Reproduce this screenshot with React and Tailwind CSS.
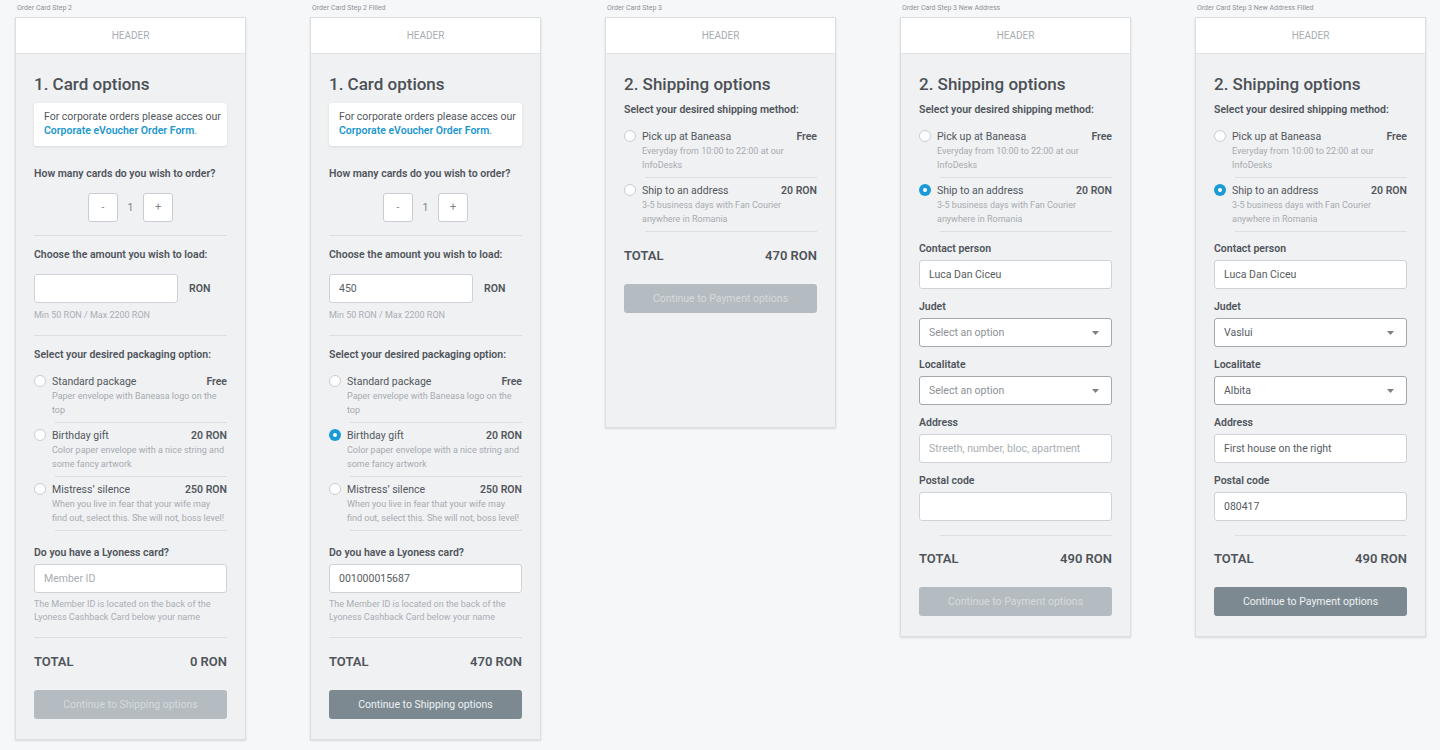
import React from "react";

const FONT = { fontFamily: "Roboto, 'Noto Sans', Arial, sans-serif" };

function Radio({ checked }) {
  if (checked) {
    return (
      <div className="mt-[1px] flex h-[12px] w-[12px] shrink-0 items-center justify-center rounded-full bg-[#1a9bd7]">
        <div className="h-[4px] w-[4px] rounded-full bg-white" />
      </div>
    );
  }
  return <div className="mt-[1px] h-[12px] w-[12px] shrink-0 rounded-full border border-[#c9cdd1] bg-white" />;
}

function Option({ title, price, desc, checked }) {
  return (
    <div className="flex flex-col">
      <div className="flex pt-[5px] pb-[5px]">
        <Radio checked={checked} />
        <div className="ml-[6px] flex-1">
          <div className="flex justify-between text-[10.5px] leading-[15px] text-[#52575d]">
            <span>{title}</span>
            <span className="font-semibold">{price}</span>
          </div>
          <div className="text-[9px] leading-[14px] text-[#a6abb0]">
            {desc.map((l, i) => (
              <div key={i} className="whitespace-nowrap">{l}</div>
            ))}
          </div>
        </div>
      </div>
      <div className="ml-[21px] h-px bg-[#dcdfe2]" />
    </div>
  );
}

function Divider({ className = "" }) {
  return <div className={"h-px bg-[#dcdfe2] " + className} />;
}

function Label({ children, className = "" }) {
  return <div className={"text-[10.5px] font-semibold leading-[14px] text-[#4f545a] " + className}>{children}</div>;
}

function Input({ value, placeholder, className = "" }) {
  return (
    <div className={"flex h-[29px] items-center rounded-[3px] border border-[#cfd3d7] bg-white px-[9px] text-[10.5px] " + className}>
      {value ? <span className="text-[#575c62]">{value}</span> : <span className="text-[#a8adb2]">{placeholder || ""}</span>}
    </div>
  );
}

function Select({ value, className = "" }) {
  return (
    <div className={"flex h-[29px] items-center justify-between rounded-[3px] border border-[#a3a8ad] bg-white pl-[9px] pr-[12px] text-[10.5px] " + className}>
      <span className={value ? "text-[#575c62]" : "text-[#8c9196]"}>{value || "Select an option"}</span>
      <svg width="7" height="4" viewBox="0 0 7 4"><path d="M0 0 L7 0 L3.5 4 Z" fill="#7a8086" /></svg>
    </div>
  );
}

function Button({ children, enabled, className = "" }) {
  return (
    <div
      className={
        "flex h-[29px] items-center justify-center rounded-[3px] text-[10.5px] " +
        (enabled ? "bg-[#7c8991] text-[#eef1f3]" : "bg-[#b4bcc1] text-[#d5dadd]") +
        " " +
        className
      }
    >
      {children}
    </div>
  );
}

function Total({ value, className = "" }) {
  return (
    <div className={"flex justify-between text-[13px] font-semibold leading-[16px] text-[#4f545a] " + className}>
      <span>TOTAL</span>
      <span>{value}</span>
    </div>
  );
}

function Column({ label, children, cardClass = "" }) {
  return (
    <div className="flex w-[231px] shrink-0 flex-col">
      <div className="h-[17px] pl-[2px] text-[7px] leading-[17px] text-[#8d9297]">{label}</div>
      <div className={"flex flex-col border border-[#dcdfe2] bg-[#f0f1f3] shadow-[0_1px_2px_rgba(0,0,0,0.12)] " + cardClass}>
        <div className="flex h-[36px] items-center justify-center border-b border-[#e1e3e6] bg-white text-[10px] text-[#a9adb2]">
          HEADER
        </div>
        <div className="flex flex-col px-[18px] pt-[20px] pb-[20px]">{children}</div>
      </div>
    </div>
  );
}

function Title({ children }) {
  return <div className="text-[17px] font-medium leading-[20px] text-[#4b5056]">{children}</div>;
}

const packaging = [
  { title: "Standard package", price: "Free", desc: ["Paper envelope with Baneasa logo on the", "top"] },
  { title: "Birthday gift", price: "20 RON", desc: ["Color paper envelope with a nice string and", "some fancy artwork"] },
  { title: "Mistress\u2019 silence", price: "250 RON", desc: ["When you live in fear that your wife may", "find out, select this. She will not, boss level!"] },
];

const shipping = [
  { title: "Pick up at Baneasa", price: "Free", desc: ["Everyday from 10:00 to 22:00 at our", "InfoDesks"] },
  { title: "Ship to an address", price: "20 RON", desc: ["3-5 business days with Fan Courier", "anywhere in Romania"] },
];

function CardStep2({ filled }) {
  return (
    <>
      <Title>1. Card options</Title>
      <div className="mt-[9px] rounded-[3px] bg-white px-[10px] pt-[7px] pb-[8px] text-[10.5px] leading-[14px] text-[#52575d] shadow-[0_1px_3px_rgba(0,0,0,0.1)]">
        <div className="whitespace-nowrap">For corporate orders please acces our</div>
        <div className="whitespace-nowrap">
          <span className="font-semibold text-[#1c97cf]">Corporate eVoucher Order Form</span>
          <span className="text-[#1c97cf]">.</span>
        </div>
      </div>
      <Label className="mt-[21px]">How many cards do you wish to order?</Label>
      <div className="mt-[12px] flex items-center justify-center gap-[9px]">
        <div className="flex h-[29px] w-[30px] items-center justify-center rounded-[3px] border border-[#c9cdd1] bg-white text-[10px] text-[#7d8288]">-</div>
        <div className="w-[7px] text-center text-[10.5px] text-[#7d8288]">1</div>
        <div className="flex h-[29px] w-[30px] items-center justify-center rounded-[3px] border border-[#c9cdd1] bg-white text-[11px] text-[#7d8288]">+</div>
      </div>
      <Divider className="mt-[13px]" />
      <Label className="mt-[12px]">Choose the amount you wish to load:</Label>
      <div className="mt-[12px] flex items-center">
        <Input value={filled ? "450" : ""} className="w-[144px]" />
        <span className="ml-[11px] text-[10.5px] font-semibold text-[#4f545a]">RON</span>
      </div>
      <div className="mt-[6px] text-[9px] leading-[12px] text-[#a9aeb3]">Min 50 RON / Max 2200 RON</div>
      <Divider className="mt-[14px]" />
      <Label className="mt-[12px]">Select your desired packaging option:</Label>
      <div className="mt-[7px] flex flex-col">
        {packaging.map((o, i) => (
          <Option key={i} {...o} checked={filled && i === 1} />
        ))}
      </div>
      <Label className="mt-[15px]">Do you have a Lyoness card?</Label>
      <Input className="mt-[4px]" value={filled ? "001000015687" : ""} placeholder="Member ID" />
      <div className="mt-[5px] text-[9px] leading-[13px] text-[#a9aeb3]">
        <div className="whitespace-nowrap">The Member ID is located on the back of the</div>
        <div className="whitespace-nowrap">Lyoness Cashback Card below your name</div>
      </div>
      <Divider className="mt-[13px]" />
      <Total className="mt-[16px]" value={filled ? "470 RON" : "0 RON"} />
      <Button className="mt-[20px]" enabled={filled}>Continue to Shipping options</Button>
    </>
  );
}

function ShippingHead({ checked }) {
  return (
    <>
      <Title>2. Shipping options</Title>
      <Label className="mt-[9px]">Select your desired shipping method:</Label>
      <div className="mt-[7px] flex flex-col">
        {shipping.map((o, i) => (
          <Option key={i} {...o} checked={checked && i === 1} />
        ))}
      </div>
    </>
  );
}

function Field({ label, children, first }) {
  return (
    <>
      <Label className={first ? "mt-[10px]" : "mt-[11px]"}>{label}</Label>
      <div className="mt-[4px]">{children}</div>
    </>
  );
}

function CardStep3Address({ filled }) {
  return (
    <>
      <ShippingHead checked />
      <Field label="Contact person" first>
        <Input value="Luca Dan Ciceu" />
      </Field>
      <Field label="Judet">
        <Select value={filled ? "Vaslui" : ""} />
      </Field>
      <Field label="Localitate">
        <Select value={filled ? "Albita" : ""} />
      </Field>
      <Field label="Address">
        <Input value={filled ? "First house on the right" : ""} placeholder="Streeth, number, bloc, apartment" />
      </Field>
      <Field label="Postal code">
        <Input value={filled ? "080417" : ""} />
      </Field>
      <div className="mt-[14px] ml-[21px] h-px bg-[#dcdfe2]" />
      <Total className="mt-[15px]" value="490 RON" />
      <Button className="mt-[20px]" enabled={filled}>Continue to Payment options</Button>
    </>
  );
}

export default function App() {
  return (
    <div style={FONT} className="min-h-[750px] w-[1440px] bg-[#f6f7f9]">
      <div className="flex items-start gap-[64px] pl-[15px]">
        <Column label="Order Card Step 2">
          <CardStep2 filled={false} />
        </Column>
        <Column label="Order Card Step 2 Filled">
          <CardStep2 filled />
        </Column>
        <Column label="Order Card Step 3" cardClass="h-[411px]">
          <ShippingHead checked={false} />
          <Total className="mt-[16px]" value="470 RON" />
          <Button className="mt-[20px]" enabled={false}>Continue to Payment options</Button>
        </Column>
        <Column label="Order Card Step 3 New Address">
          <CardStep3Address filled={false} />
        </Column>
        <Column label="Order Card Step 3 New Address Filled">
          <CardStep3Address filled />
        </Column>
      </div>
    </div>
  );
}
